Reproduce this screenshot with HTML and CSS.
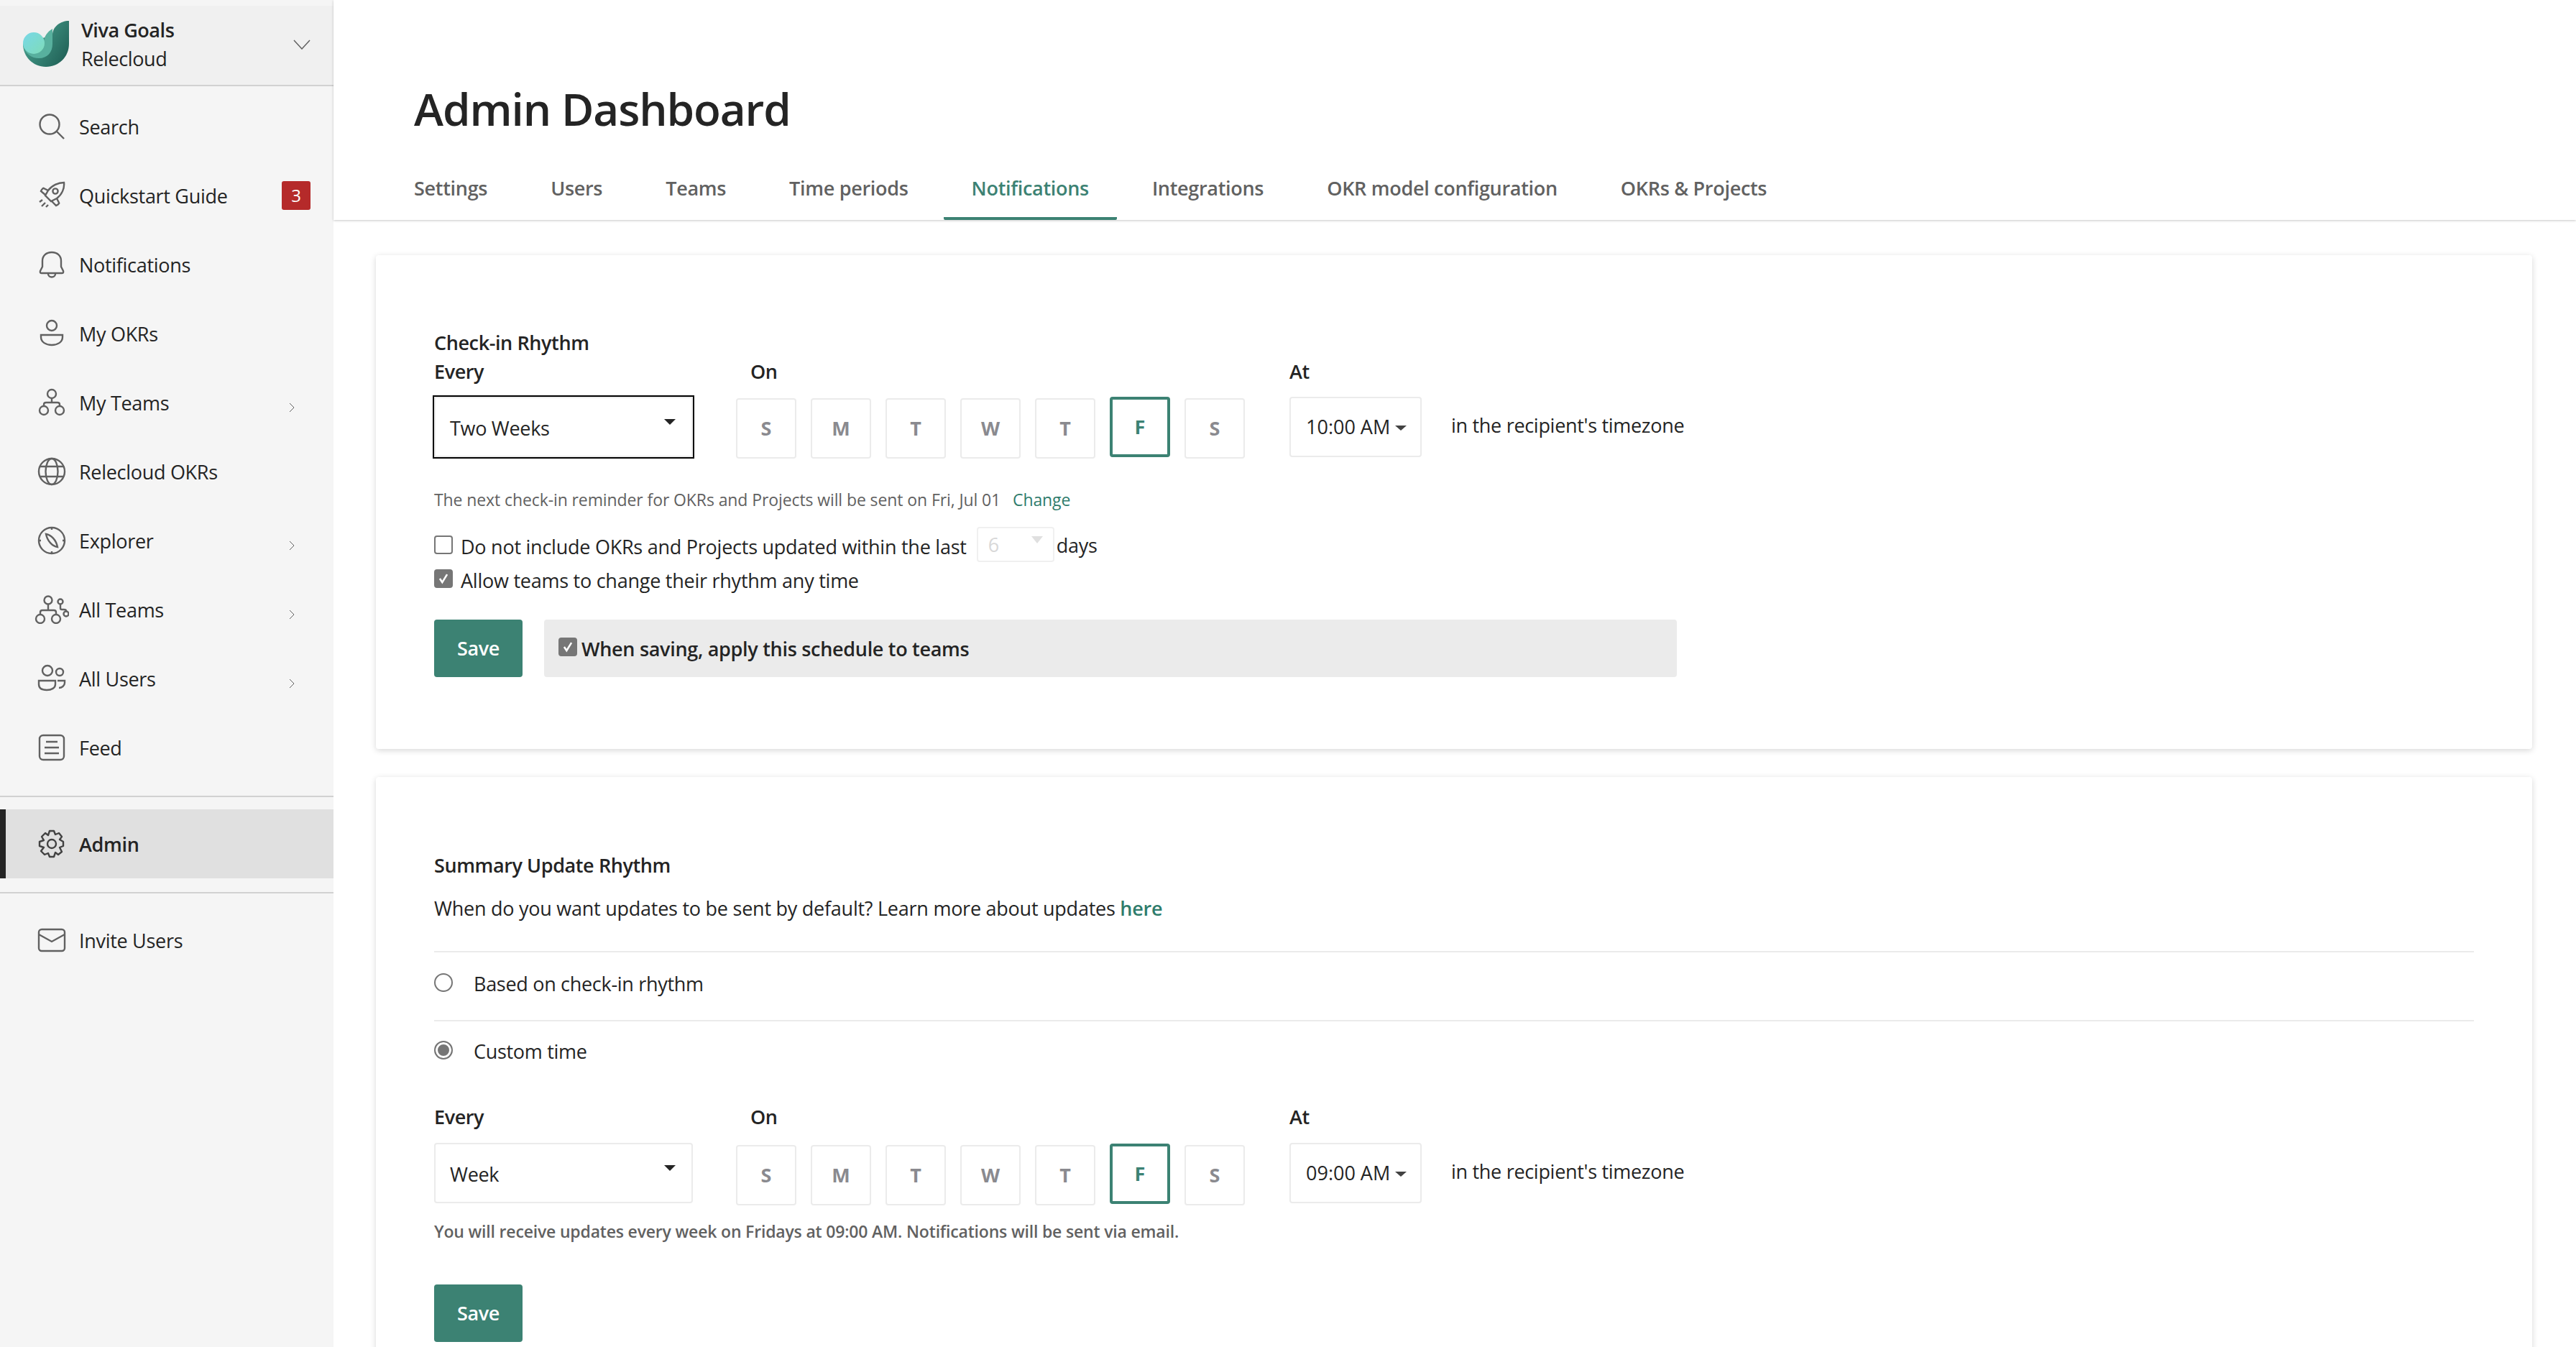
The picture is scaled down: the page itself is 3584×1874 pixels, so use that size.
FILE: index.html
```html
<!DOCTYPE html>
<html lang="en">
<head>
<meta charset="utf-8">
<title>Admin Dashboard</title>
<link rel="stylesheet" href="styles.css">
</head>
<body>
<div class="app">
  <aside class="sidebar">
    <div class="brand">
      <svg class="logo" viewBox="0 0 64 64">
        <defs>
          <linearGradient id="g1" x1="0.15" y1="0.3" x2="1" y2="0.85"><stop offset="0" stop-color="#449a88"/><stop offset="1" stop-color="#1f5f55"/></linearGradient>
          <linearGradient id="g2" x1="0" y1="0" x2="1" y2="1"><stop offset="0" stop-color="#78d8e8"/><stop offset="1" stop-color="#7fdcb8"/></linearGradient>
        </defs>
        <path fill="url(#g1)" d="M64 0V32C64 50 50 64 32 64C14 64 0 50 0 32L41 20C41 8 52 0 64 0Z"/>
        <path fill="#58b09e" d="M0 34C3 46 12 52 22 52C34 52 41 44 41 32V11C34 15 29 22 29 30Z"/>
        <circle cx="15" cy="31" r="15" fill="url(#g2)"/>
      </svg>
      <div class="brand-text">
        <div class="brand-name">Viva Goals</div>
        <div class="brand-org">Relecloud</div>
      </div>
      <svg class="brand-chevron" viewBox="0 0 24 14"><path d="M1 1L12 13L23 1"/></svg>
    </div>
    <nav class="nav">
      <a class="nav-item">
        <svg class="ico" viewBox="0 0 40 40"><circle cx="17" cy="17" r="13.5"/><path d="M27 27L37 37"/></svg>
        <span class="nav-label">Search</span>
      </a>
      <a class="nav-item">
        <svg class="ico" viewBox="0 0 40 40"><path d="M15 13C20 6 29 2 37 2C38 10 34 19 27 24L19 28L11 20Z"/><circle cx="25" cy="14" r="3.6"/><path d="M15 13L9 10C8 9 7 11 6 12L5 14L11 19M27 24L30 30C31 31 29 32 28 33L26 34L20 28M7 26L3 29M11 30L6 35M15 33L12 36"/></svg>
        <span class="nav-label">Quickstart Guide</span>
        <span class="badge">3</span>
      </a>
      <a class="nav-item">
        <svg class="ico" viewBox="0 0 40 40"><path d="M4 29L7 23V15C7 8 12 3 20 3C28 3 33 8 33 15V23L36 29C36.500 31 36 32 34 32H6C4 32 3.500 31 4 29Z"/><path d="M15 33C15 39 25 39 25 33"/></svg>
        <span class="nav-label">Notifications</span>
      </a>
      <a class="nav-item">
        <svg class="ico" viewBox="0 0 40 40"><circle cx="20" cy="9" r="7"/><path d="M5 22H35V25C35 32 28 36 20 36C12 36 5 32 5 25Z"/></svg>
        <span class="nav-label">My OKRs</span>
      </a>
      <a class="nav-item">
        <svg class="ico" viewBox="0 0 40 40"><circle cx="20" cy="8" r="6"/><circle cx="9" cy="31" r="6"/><circle cx="31" cy="31" r="6"/><path d="M20 14V20M9 25V23C9 21 10 20 12 20H28C30 20 31 21 31 23V25"/></svg>
        <span class="nav-label">My Teams</span>
        <svg class="nav-chev" viewBox="0 0 8 14"><path d="M1 1L7 7L1 13"/></svg>
      </a>
      <a class="nav-item">
        <svg class="ico" viewBox="0 0 40 40"><circle cx="20" cy="20" r="18"/><ellipse cx="20" cy="20" rx="8.500" ry="18"/><path d="M4 13H36M4 27H36"/></svg>
        <span class="nav-label">Relecloud OKRs</span>
      </a>
      <a class="nav-item">
        <svg class="ico" viewBox="0 0 40 40"><circle cx="20" cy="20" r="18"/><path d="M12 11C19 12 26 19 28 29C21 28 14 21 12 11Z"/><path d="M20 2V5M20 35V38M2 20H5M35 20H38"/></svg>
        <span class="nav-label">Explorer</span>
        <svg class="nav-chev" viewBox="0 0 8 14"><path d="M1 1L7 7L1 13"/></svg>
      </a>
      <a class="nav-item">
        <svg class="ico ico-wide" viewBox="0 0 48 40"><circle cx="19" cy="7" r="5.500"/><circle cx="8" cy="33" r="6"/><circle cx="30" cy="33" r="6"/><path d="M19 13V20M8 27V24C8 22 9 21 11 21H27C29 21 30 22 30 24V27"/><circle cx="36" cy="9" r="3.500"/><circle cx="44" cy="26" r="3.500"/><path d="M36 13V18C36 19 37 20 38 20H41C43 20 44 21 44 22"/></svg>
        <span class="nav-label">All Teams</span>
        <svg class="nav-chev" viewBox="0 0 8 14"><path d="M1 1L7 7L1 13"/></svg>
      </a>
      <a class="nav-item">
        <svg class="ico" viewBox="0 0 40 40"><circle cx="14" cy="9" r="7"/><circle cx="31" cy="11" r="5"/><path d="M2 23H25V28C25 33 20 36 13 36C6 36 2 33 2 28Z"/><path d="M28 23H38V26C38 30 34 33 30 33"/></svg>
        <span class="nav-label">All Users</span>
        <svg class="nav-chev" viewBox="0 0 8 14"><path d="M1 1L7 7L1 13"/></svg>
      </a>
      <a class="nav-item">
        <svg class="ico" viewBox="0 0 40 40"><rect x="3" y="3" width="34" height="34" rx="5"/><path d="M12 12H28M10 20H30M10 28H30"/></svg>
        <span class="nav-label">Feed</span>
      </a>
    </nav>
    <div class="side-rule"></div>
    <a class="nav-item nav-item-active">
      <svg class="ico" viewBox="0 0 40 40"><path d="M17 2H23L25 7L30 5L34 10L31 14L36 17V23L31 25L34 31L29 35L25 32L23 38H17L15 33L10 35L5 30L9 25L3 23V17L9 15L6 10L11 5L15 8Z" stroke-linejoin="round"/><circle cx="20" cy="20" r="6"/></svg>
      <span class="nav-label">Admin</span>
    </a>
    <div class="side-rule"></div>
    <a class="nav-item">
      <svg class="ico" viewBox="0 0 40 40"><rect x="2" y="5" width="36" height="30" rx="4"/><path d="M2 12L20 22L38 12"/></svg>
      <span class="nav-label">Invite Users</span>
    </a>
  </aside>

  <main class="main">
    <header class="page-head">
      <h1 class="page-title">Admin Dashboard</h1>
      <div class="tabs">
        <a class="tab">Settings</a>
        <a class="tab">Users</a>
        <a class="tab">Teams</a>
        <a class="tab">Time periods</a>
        <a class="tab tab-active">Notifications</a>
        <a class="tab">Integrations</a>
        <a class="tab">OKR model configuration</a>
        <a class="tab">OKRs &amp; Projects</a>
      </div>
    </header>
    <div class="content">
      <section class="card card-checkin">
        <div class="section-title">Check-in Rhythm</div>
        <div class="schedule">
          <div class="col-every">
            <div class="field-label">Every</div>
            <div class="select select-focus"><span>Two Weeks</span><i class="caret"></i></div>
          </div>
          <div class="col-on">
            <div class="field-label field-label-on">On</div>
            <div class="days">
              <span class="day">S</span><span class="day">M</span><span class="day">T</span><span class="day">W</span><span class="day">T</span><span class="day day-on">F</span><span class="day">S</span>
            </div>
          </div>
          <div class="col-at">
            <div class="field-label">At</div>
            <div class="time"><span>10:00 AM</span><i class="caret caret-sm"></i></div>
          </div>
          <div class="tz">in the recipient's timezone</div>
        </div>
        <p class="hint hint-next">The next check-in reminder for OKRs and Projects will be sent on Fri, Jul 01 <a class="link">Change</a></p>
        <div class="check-row check-row-a">
          <span class="box"></span>
          <span class="check-text">Do not include OKRs and Projects updated within the last</span>
          <span class="mini-select"><span>6</span><i class="caret caret-dis"></i></span>
          <span class="days-word">days</span>
        </div>
        <div class="check-row check-row-b">
          <span class="box box-on"><svg viewBox="0 0 26 26"><path d="M7 13L11 19L19 6"/></svg></span>
          <span class="check-text">Allow teams to change their rhythm any time</span>
        </div>
        <div class="save-row">
          <button class="btn">Save</button>
          <div class="apply-band">
            <span class="box box-on"><svg viewBox="0 0 26 26"><path d="M7 13L11 19L19 6"/></svg></span>
            <span class="apply-text">When saving, apply this schedule to teams</span>
          </div>
        </div>
      </section>

      <section class="card card-summary">
        <div class="section-title">Summary Update Rhythm</div>
        <p class="lead">When do you want updates to be sent by default? Learn more about updates <a class="link link-strong">here</a></p>
        <div class="radio-row radio-row-first"><span class="radio"></span><span>Based on check-in rhythm</span></div>
        <div class="radio-row radio-row-second"><span class="radio radio-on"></span><span>Custom time</span></div>
        <div class="schedule schedule-2">
          <div class="col-every">
            <div class="field-label">Every</div>
            <div class="select"><span>Week</span><i class="caret"></i></div>
          </div>
          <div class="col-on">
            <div class="field-label field-label-on">On</div>
            <div class="days">
              <span class="day">S</span><span class="day">M</span><span class="day">T</span><span class="day">W</span><span class="day">T</span><span class="day day-on">F</span><span class="day">S</span>
            </div>
          </div>
          <div class="col-at">
            <div class="field-label">At</div>
            <div class="time"><span>09:00 AM</span><i class="caret caret-sm"></i></div>
          </div>
          <div class="tz">in the recipient's timezone</div>
        </div>
        <p class="hint hint-summary">You will receive updates every week on Fridays at 09:00 AM. Notifications will be sent via email.</p>
        <button class="btn btn-summary">Save</button>
      </section>
    </div>
  </main>
</div>
</body>
</html>
```

FILE: styles.css
```css
* { box-sizing: border-box; }
html, body { margin: 0; height: 100%; background: #fff; }
body { font-family: "Open Sans", "Noto Sans", sans-serif; font-size: 27px; line-height: 40px; color: #242424; overflow: hidden; }
.app { display: flex; height: 1874px; overflow: hidden; }

/* sidebar */
.sidebar { width: 464px; flex: none; background: #f5f5f5; padding-top: 8px; }
.brand { height: 112px; background: #f0f0f0; border-bottom: 2px solid #d1d1d1; display: flex; align-items: flex-start; padding: 21px 32px 0 32px; }
.logo { width: 64px; height: 64px; flex: none; }
.brand-text { margin-left: 17px; width: 295px; margin-top: -7px; }
.brand-name { font-weight: 600; font-size: 27px; line-height: 40px; letter-spacing: -0.45px; }
.brand-org { line-height: 40px; letter-spacing: -0.4px; }
.brand-chevron { width: 24px; height: 14px; margin-top: 26px; flex: none; fill: none; stroke: #616161; stroke-width: 1.500; }
.nav { padding-top: 8px; }
.nav-item { height: 96px; display: flex; align-items: center; padding-left: 52px; position: relative; color: #242424; }
.ico { width: 40px; height: 40px; flex: none; fill: none; stroke: #616161; stroke-width: 2.400; margin-right: 18px; }
.ico-wide { width: 48px; margin-left: -4px; margin-right: 14px; }
.nav-label { flex: 1; letter-spacing: -0.3px; margin-top: 2px; }
.badge { width: 40px; height: 40px; background: #b52a2a; color: #fff; border-radius: 3px; text-align: center; line-height: 40px; margin-right: 32px; font-size: 24px; }
.nav-chev { width: 8px; height: 14px; fill: none; stroke: #616161; stroke-width: 1; margin-right: 54px; margin-top: 14px; flex: none; }
.side-rule { height: 2px; background: #d1d1d1; margin: 19px 0 17px; }
.nav-item-active { background: #e0e0e0; border-left: 8px solid #242424; padding-left: 44px; font-weight: 600; }
.nav-item-active .ico { stroke: #424242; }

/* header */
.main { flex: 1; min-width: 0; background: #fff; }
.page-head { height: 306px; padding-top: 107px; box-shadow: 0 1px 3px rgba(0,0,0,.22); position: relative; }
.page-title { margin: 0 0 0 112px; font-size: 62px; line-height: 88px; font-weight: 600; letter-spacing: -1.1px; color: #242424; }
.tabs { display: flex; gap: 10px; margin-top: 23px; padding-left: 73px; }
.tab { height: 88px; padding: 24px 39px 0; line-height: 40px; color: #616161; font-weight: 600; font-size: 27px; letter-spacing: -0.3px; border-bottom: 4px solid transparent; border-radius: 0 0 2px 2px; }
.tab-active { color: #3c8273; border-bottom-color: #3c8273; }

/* cards */
.content { padding: 49px 61px 0 59px; }
.card { background: #fff; border-radius: 4px; box-shadow: 0 2px 8px rgba(0,0,0,.16); padding: 0 81px; }
.card-checkin { height: 687px; padding-top: 102px; margin-bottom: 39px; }
.card-summary { height: 900px; padding-top: 103px; }
.section-title { font-weight: 600; line-height: 40px; letter-spacing: -0.4px; }
.schedule { display: flex; align-items: flex-start; }
.col-every { width: 360px; margin-right: 60px; }
.col-on { width: 708px; margin-right: 62px; }
.col-at { width: 184px; margin-right: 41px; }
.field-label { font-weight: 600; line-height: 40px; height: 55px; letter-spacing: -0.4px; }
.field-label-on { padding-left: 20px; }
.select { height: 84px; border: 2px solid #ebebeb; border-radius: 4px; padding: 4px 22px 0 20px; display: flex; align-items: center; justify-content: space-between; position: relative; letter-spacing: -0.3px; }
.select-focus { border-radius: 0; box-shadow: 0 0 0 2px #000; }
.caret { display: block; width: 0; height: 0; border-left: 8px solid transparent; border-right: 8px solid transparent; border-top: 8px solid #242424; margin-top: -18px; }
.caret-sm { border-left-width: 8px; border-right-width: 8px; border-top-width: 7px; margin-top: 2px; border-top-color: #424242; }
.caret-dis { border-top-color: #e0e0e0; border-left-width: 8px; border-right-width: 8px; border-top-width: 10px; margin-top: -14px; }
.days { display: flex; gap: 20px; margin-top: 2px; }
.day { width: 84px; height: 84px; border: 2px solid #ebebeb; border-radius: 4px; display: flex; align-items: center; justify-content: center; font-weight: 700; color: #8a8a8f; font-size: 27px; }
.day-on { border: 4px solid #3c8273; color: #3c8273; margin-top: -2px; }
.time { height: 84px; border: 2px solid #ebebeb; border-radius: 4px; padding: 0 0 0 21px; display: flex; align-items: center; gap: 7px; }
.tz { margin-top: 75px; letter-spacing: -0.3px; }

.hint { margin: 0; font-size: 23px; line-height: 36px; color: #616161; letter-spacing: -0.1px; }
.hint-next { margin-top: 39px; }
.link { color: #2f7c6c; margin-left: 11px; }
.check-row { display: flex; align-items: flex-start; position: relative; }
.check-row-a { margin-top: 30px; height: 49px; }
.check-row-b { margin-top: -2px; height: 66px; }
.box { width: 26px; height: 26px; flex: none; border: 2px solid #767676; border-radius: 4px; background: #fff; display: block; margin-top: 2px; }
.box-on { background: #767676; }
.box svg { display: block; width: 22px; height: 22px; fill: none; stroke: #fff; stroke-width: 3; }
.check-text { margin-left: 11px; margin-top: -2px; letter-spacing: -0.25px; line-height: 40px; }
.mini-select { width: 108px; height: 49px; margin-left: 14px; margin-top: -10px; border: 2px solid #f0f0f0; border-radius: 4px; display: flex; justify-content: space-between; align-items: center; padding: 0 14px; color: #d8d8d8; }
.days-word { margin-left: 3px; margin-top: -4px; letter-spacing: -0.25px; }
.save-row { display: flex; margin-top: 6px; gap: 30px; }
.btn { width: 123px; height: 80px; border: 0; border-radius: 4px; background: #3c8273; color: #fff; font: 600 27px/40px "Open Sans", "Noto Sans", sans-serif; letter-spacing: -0.4px; padding: 0; }
.apply-band { width: 1576px; height: 80px; background: #ebebeb; border-radius: 4px; display: flex; align-items: flex-start; padding: 25px 0 0 20px; }
.apply-band .box { margin-top: 0; }
.apply-text { margin-left: 6px; margin-top: -4px; font-weight: 600; letter-spacing: -0.3px; }

.lead { margin: 20px 0 0; line-height: 40px; letter-spacing: -0.25px; }
.link-strong { margin-left: 0; font-weight: 600; }
.radio-row { height: 96px; border-top: 2px solid #ebebeb; display: flex; align-items: flex-start; padding-top: 24px; letter-spacing: -0.3px; }
.radio-row-first { margin-top: 39px; }
.radio-row-second { padding-top: 22px; }
.radio { width: 26px; height: 26px; border-radius: 50%; border: 2px solid #767676; flex: none; margin-right: 29px; background: #fff; margin-top: 5px; }
.radio-on { background: #767676; box-shadow: inset 0 0 0 3px #fff; }
.schedule-2 { margin-top: 19px; }
.schedule-2 .field-label { height: 56px; }
.schedule-2 .col-on .field-label { height: 57px; }
.schedule-2 .tz { margin-top: 76px; }
.hint-summary { margin-top: 18px; font-weight: 600; letter-spacing: -0.18px; }
.btn-summary { display: block; margin-top: 56px; }
```
